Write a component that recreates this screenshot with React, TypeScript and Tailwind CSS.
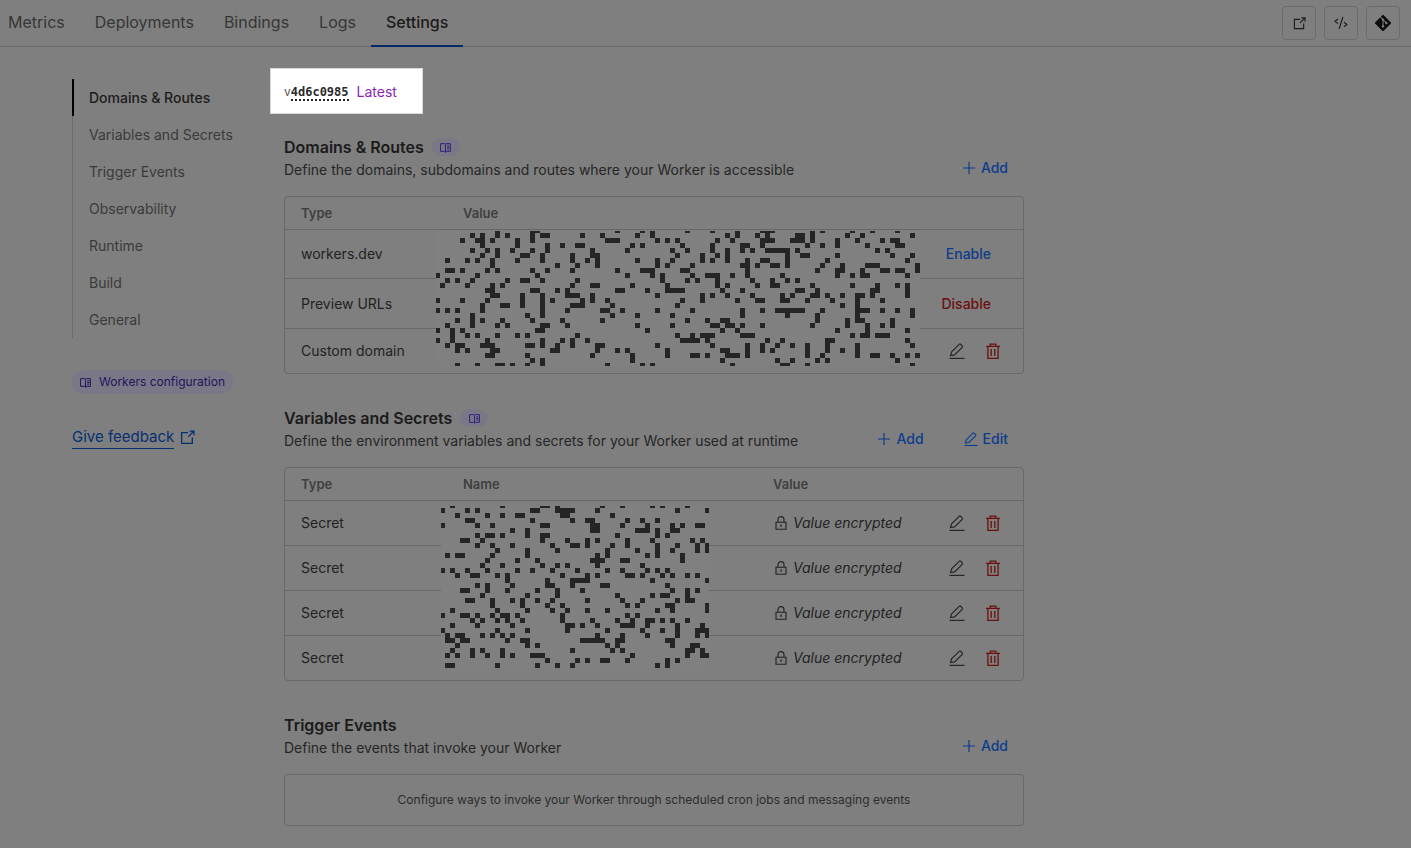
import React from "react";
import { SiGit } from "react-icons/si";

const DOMAIN_MOSAIC = [
  "12 19-20 36 41 43 50 55 60 65-67 75 77 83 87 92",
  "7 9 12 14 19 21-22 29 33 40 43 58 60 64 66 72-73 75 82 85 95",
  "5 8-9 11 16 19 34-36 44 46 48 56 59 65-67 71-73 75 80 84 89 91-92",
  "9 16 22 25 28-29 39 41 49 55 61-62 65 74 77 80 86 92-93",
  "7 10 12 15 19 22 31 38 47 50 55 58 61 63 66-70 72 88 90",
  "9 12 17-18 21 27 31-32 48 53 56 58 70 73-74 80 91 95",
  "2 6 8 11 16 21 27 30 32 40 44 47 53 55 58 62 65-66 70 78 94",
  "11 24 28 32 44 46 51 61-62 64 67-68 70 77 81 86-88 96",
  "2-3 5 10 12 19 22 27 36 41-43 49-50 62 76 80-81 85 89-90 92-93 96",
  "0 8 20 38 43 45 51 54-56 59 62 69 80 83 85-86 94",
  "2 4 7 14 17-18 21 28 45 50 52 56 63 67 70 72",
  "1 6 11 13 27 31-32 39 46 56 58 64 67-68 75 83 88 92 94",
  "10-11 19-20 24 26 36-37 42 46-49 57 61 72-73 76 87-88 94",
  "11-12 17 21 26-28 31 44 53 55 58 63 69 71 75-76 78 81 84-85 87 94",
  "0 5 10 17 21 23 29 31 34 49 53 60 64-65 69-70 74 79 84 89",
  "9 13-14 17 21 27-29 35 48 81 84",
  "0 2 4 9 21 26 33-34 37 44 51 61 65 68-73 77 84-86 89 92 95",
  "7 18 21 35 40 47 61 70 76 84 95",
  "4 7 9 13 19 25 33 50 54 57-58 76 82 84-85 91",
  "2 7 12 14 21-22 26 40 47 55-56 58-59 61 65 75 82 86 89 91",
  "0 3 5 20-21 42 57 60 80 86 94",
  "3 6 8 12 16 18 28 48 51 53-55 61-63 83 85-86 88-90",
  "0 3 10 21 25 27 30 49-52 54 66 69 78-79 94",
  "2 4-5 9-11 18-19 21 24 27 32-33 44 55 62 65 68 71 74 78 84 95",
  "4 6 11-12 23-24 32 36 38 46 57-58 62 65 67 74 78 81 84",
  "10-11 18 31 39 46 51-52 54 58-60 62 74 77 84 87-88 91 94 96",
  "19 21 39 57 68 71 76 78 92",
  "4 8 12-13 15 18 21 34 41 43 59 69-70 74 95",
];

const SECRET_MOSAIC = [
  "2 12 20-21 23 32 36 42 44 49",
  "0 5 7 18-19 23-26 31 47 53",
  "3 9 12 15-16 24-25 34",
  "5-6 18 26 29-30 37 40 43",
  "0 7 10 20-21 30-31 36 41 46 48 51-52",
  "14 17 30-31 39-41 43 46-47",
  "7 9-10 12 17 20-21 35 43 45",
  "4-5 8 20 25 29 31 37 42 50 52",
  "7 10 14 22 26-27 29 34 37 43 47 51 53",
  "11 17 23 33 39 43 46 51 53",
  "1 3-4 10 17 31 33 41 43 48",
  "9 15 19 30-32 36-37 48",
  "8 12 20 23 25 31 40",
  "0 2 5 9 15 18 22 27 33 36 41 43 45",
  "3 6-7 11 13 24 29 31 37-38 40 44 46 49 51",
  "13 21 26-29 42 53",
  "7 9 14 21-22 26 32-33 45",
  "4-5 9 13 19 23 28 46 49 51",
  "8 17 23 35 42 44-45 49",
  "5-6 10 14 16 19 22 29 36 40 47 49-50",
  "10 16 21 24 37 39 45-46 53",
  "2 11 17 22 25 29 33 43 46 53",
  "0 4-5 7 10 12-13 15 24 37 39",
  "6 8 11 13 16 24 30 35 38 41-42 44 46 49",
  "2 7 14 25-26 28 31 36-38 41 47 52",
  "0 11 17 25 33 40 44 47 51-53",
  "1 3-4 8 10 12 14 31 36 41 47 51 53",
  "1-2 4-5 13 16-17 28-32 35-36 45-46",
  "3 17 19 33 35 46 50-51",
  "2 6 8 12 26 34 36 49-50 52",
  "1 3 6 9 12 14 18-20 38 49 52-53",
  "21 27 29 32-33 37 45 47",
  "1-2 11 19 23 26 43 45",
];

// The first column and row are cut short; every other cell is 5px square.
function mosaicPath(rows: string[]) {
  let d = "";
  rows.forEach((row, r) => {
    const y = r === 0 ? 0 : 5 * r - 3;
    const h = r === 0 ? 2 : 5;
    row.split(" ").forEach((run) => {
      const [a, b = a] = run.split("-").map(Number);
      const x = a === 0 ? 0 : 5 * a - 1;
      d += `M${x} ${y}H${5 * b + 4}v${h}H${x}z`;
    });
  });
  return d;
}

function Mosaic({ rows, width, height, className }: { rows: string[]; width: number; height: number; className: string }) {
  return (
    <svg aria-hidden="true" width={width} height={height} viewBox={`0 0 ${width} ${height}`} shapeRendering="crispEdges" className={className}>
      <rect width={width} height={height} fill="#808080" />
      <path d={mosaicPath(rows)} fill="#252525" />
    </svg>
  );
}

function ExternalIcon({ size = 14 }: { size?: number }) {
  return (
    <svg width={size} height={size} viewBox="0 0 14 14" fill="none" stroke="currentColor" strokeWidth="1.2" aria-hidden="true">
      <path d="M7.5 2.5H1.5v10h10V7" />
      <path d="M9 1h4v4M13 1 7.6 6.4" />
    </svg>
  );
}

function CodeIcon() {
  return (
    <svg width="14" height="14" viewBox="0 0 14 14" fill="none" stroke="currentColor" strokeWidth="1.1" aria-hidden="true">
      <path d="M4 3 1 5.3l3 2.3M10 6.2 13 8.5l-3 2.3M8.9 1 5.1 13" />
    </svg>
  );
}

function BookIcon({ size = 10 }: { size?: number }) {
  return (
    <svg width={size} height={size} viewBox="0 0 10 10" fill="none" stroke="currentColor" strokeWidth="0.9" aria-hidden="true">
      <path d="M5 1.5H.5v7H4l1 .8 1-.8h3.5v-7H6l-1 .7v7M6.5 3.5h2M6.5 5h2M6.5 6.5h2" />
    </svg>
  );
}

function PlusIcon() {
  return (
    <svg width="14" height="14" viewBox="0 0 14 14" fill="none" stroke="currentColor" strokeWidth="1.2" aria-hidden="true">
      <path d="M7 1v12M1 7h12" />
    </svg>
  );
}

function PencilIcon({ size = 16 }: { size?: number }) {
  return (
    <svg width={size} height={size} viewBox="0 0 16 16" fill="none" stroke="currentColor" strokeWidth="1.2" aria-hidden="true">
      <path d="M1.5 12.6 2.6 8.9 10.2 1.3a1 1 0 0 1 1.4 0l1.6 1.6a1 1 0 0 1 0 1.4L5.6 11.9z" />
      <path d="M.5 15.4h15" />
    </svg>
  );
}

function TrashIcon() {
  return (
    <svg width="16" height="16" viewBox="0 0 16 16" fill="none" stroke="currentColor" strokeWidth="1.3" aria-hidden="true">
      <path d="M1 3.4h14M5.2 3.4V1.2h5.6v2.2M2.9 3.4v12h10.2v-12M6.2 6v7M9.8 6v7" />
    </svg>
  );
}

function LockIcon() {
  return (
    <svg width="12" height="14" viewBox="0 0 12 14" fill="none" stroke="currentColor" strokeWidth="1.1" aria-hidden="true">
      <path d="M1 6.3h10v7H1zM3 6V3.6a3 3 0 0 1 6 0V6" />
      <path d="M6 8.4v2.6M5.3 9h1.4" />
    </svg>
  );
}

const TABS = ["Metrics", "Deployments", "Bindings", "Logs", "Settings"];
const SECTIONS = ["Domains & Routes", "Variables and Secrets", "Trigger Events", "Observability", "Runtime", "Build", "General"];

function ToolButton({ label, children }: { label: string; children: React.ReactNode }) {
  return (
    <button aria-label={label} className="flex size-[34px] items-center justify-center rounded border border-[#6c6c6c] text-[#1c1c1c]">
      {children}
    </button>
  );
}

function ActionButton({ icon, children }: { icon: React.ReactNode; children: React.ReactNode }) {
  return (
    <button className="flex items-center gap-[5px] text-sm font-medium text-[#0c3c8c]">
      {icon}
      {children}
    </button>
  );
}

function SectionHeader({ title, text, docs, children }: { title: string; text: string; docs?: boolean; children: React.ReactNode }) {
  return (
    <div className="flex items-center justify-between pr-4 pb-4">
      <div>
        <div className="flex h-6 items-center gap-2">
          <h2 className="text-base font-semibold text-[#1b1b1b]">{title}</h2>
          {docs && (
            <a href="#docs" aria-label={`${title} documentation`} className="flex h-[18px] w-7 items-center justify-center rounded-full bg-[#7a7887] text-[#30217a]">
              <BookIcon size={11} />
            </a>
          )}
        </div>
        <p className="pt-px text-sm text-[#262626]">{text}</p>
      </div>
      <div className="flex gap-10 pt-5">{children}</div>
    </div>
  );
}

function RowActions() {
  return (
    <div className="flex justify-end gap-5">
      <button aria-label="Edit" className="text-[#262626]">
        <PencilIcon />
      </button>
      <button aria-label="Delete" className="text-[#6b1010]">
        <TrashIcon />
      </button>
    </div>
  );
}

const TH = "h-8 px-4 text-left text-[13px] font-semibold text-[#3f3f3f]";
const TD = "border-t border-[#696969] px-4";
const FRAME = "relative rounded border border-[#696969]";

function DomainsTable() {
  return (
    <div className={FRAME}>
      <table className="w-full table-fixed border-separate border-spacing-0 text-sm text-[#222]">
        <colgroup>
          <col className="w-[162px]" />
          <col />
          <col className="w-[110px]" />
        </colgroup>
        <thead>
          <tr>
            <th className={TH}>Type</th>
            <th className={TH}>Value</th>
            <th className={TH} aria-label="Actions" />
          </tr>
        </thead>
        <tbody>
          <tr className="h-[49px]">
            <td className={TD}>workers.dev</td>
            <td className={TD} />
            <td className="border-t border-[#696969] pr-8 text-right">
              <button className="font-medium text-[#0c3c8c]">Enable</button>
            </td>
          </tr>
          <tr className="h-[50px]">
            <td className={TD}>Preview URLs</td>
            <td className={TD} />
            <td className="border-t border-[#696969] pr-8 text-right">
              <button className="font-medium text-[#6b1010]">Disable</button>
            </td>
          </tr>
          <tr className="h-[45px]">
            <td className={TD}>Custom domain</td>
            <td className={TD} />
            <td className="border-t border-[#696969] pr-[22px]">
              <RowActions />
            </td>
          </tr>
        </tbody>
      </table>
      <Mosaic rows={DOMAIN_MOSAIC} width={484} height={135} className="absolute top-[34px] left-[151px]" />
    </div>
  );
}

function SecretsTable() {
  return (
    <div className={FRAME}>
      <table className="w-full table-fixed border-separate border-spacing-0 text-sm text-[#222]">
        <colgroup>
          <col className="w-[162px]" />
          <col className="w-[310px]" />
          <col />
          <col className="w-[90px]" />
        </colgroup>
        <thead>
          <tr>
            <th className={TH}>Type</th>
            <th className={TH}>Name</th>
            <th className={TH}>Value</th>
            <th className={TH} aria-label="Actions" />
          </tr>
        </thead>
        <tbody>
          {[0, 1, 2, 3].map((i) => (
            <tr key={i} className="h-[45px]">
              <td className={TD}>Secret</td>
              <td className={TD} />
              <td className={TD}>
                <span className="flex items-center gap-[6px] pl-[2px] italic">
                  <LockIcon />
                  Value encrypted
                </span>
              </td>
              <td className="border-t border-[#696969] pr-[22px]">
                <RowActions />
              </td>
            </tr>
          ))}
        </tbody>
      </table>
      <Mosaic rows={SECRET_MOSAIC} width={268} height={162} className="absolute top-[38px] left-[156px]" />
    </div>
  );
}

export default function App() {
  return (
    <div className="min-h-screen bg-[#7f7f7f] font-['Inter',sans-serif] text-[#222]">
      <header className="flex h-[47px] items-stretch justify-between border-b border-[#696969] pr-[11px]">
        <nav className="-ml-[7px] flex">
          {TABS.map((tab) => (
            <a
              key={tab}
              href={`#${tab.toLowerCase()}`}
              className={
                tab === "Settings"
                  ? "-mb-px flex items-center border-b-2 border-[#062a66] px-[15px] pb-px font-medium text-[#1b1b1b]"
                  : "flex items-center px-[15px] pb-[2px] text-[#363636]"
              }
            >
              {tab}
            </a>
          ))}
        </nav>
        <div className="flex items-center gap-2">
          <ToolButton label="Visit">
            <ExternalIcon size={13} />
          </ToolButton>
          <ToolButton label="Edit code">
            <CodeIcon />
          </ToolButton>
          <ToolButton label="Git repository">
            <SiGit size={16} className="text-[#0c0c0c]" />
          </ToolButton>
        </div>
      </header>

      <div className="flex pl-[72px]">
        <aside className="flex w-[212px] shrink-0 flex-col items-start gap-8 pt-8">
          <nav className="w-full border-l border-[#6c6c6c]">
            {SECTIONS.map((s, i) => (
              <a
                key={s}
                href="#section"
                className={
                  i === 0
                    ? "-ml-px flex h-[37px] items-center border-l-2 border-black pl-[15px] text-sm font-medium text-[#1b1b1b]"
                    : "flex h-[37px] items-center pl-4 text-sm text-[#3a3a3a]"
                }
              >
                {s}
              </a>
            ))}
          </nav>
          <a href="#configuration" className="flex h-6 items-center gap-2 rounded-full bg-[#7a7887] px-2 text-xs text-[#22155c]">
            <BookIcon size={11} />
            Workers configuration
          </a>
          <a href="#feedback" className="flex items-center gap-[6px] text-[15px] text-[#062f72]">
            <span className="border-b border-[#062f72] leading-[22px]">Give feedback</span>
            <ExternalIcon size={15} />
          </a>
        </aside>

        <main className="max-w-[740px] min-w-0 flex-1 pt-[21px] pb-[22px]">
          <div className="-ml-[14px] flex h-[46px] w-[153px] items-center gap-2 border border-[#d8d8d8] bg-white pt-[2px] pl-[13px] text-sm">
            <span className="flex items-baseline text-xs text-[#555]">
              v
              <span className="border-b-2 border-dotted border-[#222] font-['DejaVu_Sans_Mono',monospace] leading-[14px] font-bold text-[#2b2b2b]">4d6c0985</span>
            </span>
            <span className="text-[#8f1fb3]">Latest</span>
          </div>

          <div className="flex flex-col gap-8 pt-[21px]">
            <section>
              <SectionHeader title="Domains & Routes" text="Define the domains, subdomains and routes where your Worker is accessible" docs>
                <ActionButton icon={<PlusIcon />}>Add</ActionButton>
              </SectionHeader>
              <DomainsTable />
            </section>
            <section>
              <SectionHeader title="Variables and Secrets" text="Define the environment variables and secrets for your Worker used at runtime" docs>
                <ActionButton icon={<PlusIcon />}>Add</ActionButton>
                <ActionButton icon={<PencilIcon size={14} />}>Edit</ActionButton>
              </SectionHeader>
              <SecretsTable />
            </section>
            <section>
              <SectionHeader title="Trigger Events" text="Define the events that invoke your Worker">
                <ActionButton icon={<PlusIcon />}>Add</ActionButton>
              </SectionHeader>
              <div className="flex h-[52px] items-center justify-center rounded border border-[#696969] text-xs text-[#2c2c2c]">
                Configure ways to invoke your Worker through scheduled cron jobs and messaging events
              </div>
            </section>
          </div>
        </main>
      </div>
    </div>
  );
}
